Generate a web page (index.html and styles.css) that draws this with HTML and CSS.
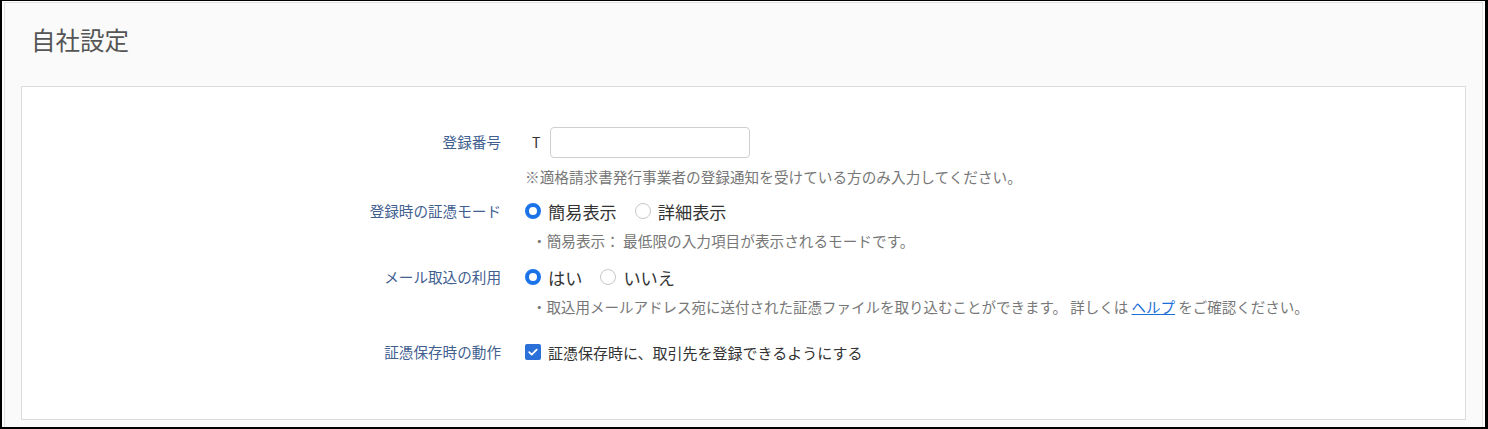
FILE: index.html
```html
<!DOCTYPE html>
<html lang="ja">
  <head>
    <meta charset="UTF-8" />
    <meta name="viewport" content="width=device-width, initial-scale=1.0" />
    <title>自社設定</title>
    <link rel="stylesheet" href="styles.css">
  </head>
  <body>
    <div class="frame">
      <div class="panel">
        <h1 class="page-title">自社設定</h1>

        <div class="card">
          <div class="field">
            <div class="field-label field-label--input">登録番号</div>
            <div class="field-body">
              <div class="reg-line">
                <span class="reg-prefix">T</span>
                <input type="text" class="text-input" />
              </div>
              <p class="note note--first">※適格請求書発行事業者の登録通知を受けている方のみ入力してください。</p>
            </div>
          </div>

          <div class="field">
            <div class="field-label">登録時の証憑モード</div>
            <div class="field-body">
              <div class="options">
                <label class="option"><span class="radio checked"></span>簡易表示</label>
                <label class="option"><span class="radio"></span>詳細表示</label>
              </div>
              <p class="note note--bullet">・簡易表示： 最低限の入力項目が表示されるモードです。</p>
            </div>
          </div>

          <div class="field field--mail">
            <div class="field-label">メール取込の利用</div>
            <div class="field-body">
              <div class="options">
                <label class="option"><span class="radio checked"></span>はい</label>
                <label class="option"><span class="radio"></span>いいえ</label>
              </div>
              <p class="note note--bullet note--long">・取込用メールアドレス宛に送付された証憑ファイルを取り込むことができます。 詳しくは <a href="#" class="help-link">ヘルプ</a> をご確認ください。</p>
            </div>
          </div>

          <div class="field field--spaced">
            <div class="field-label">証憑保存時の動作</div>
            <div class="field-body">
              <label class="check-option">
                <span class="checkbox">
                  <svg width="16" height="16" viewBox="0 0 16 16"><path d="M4.2 8.2l2.5 2.4 5-5" fill="none" stroke="#fff" stroke-width="1.8" stroke-linecap="round" stroke-linejoin="round"/></svg>
                </span>
                証憑保存時に、取引先を登録できるようにする
              </label>
            </div>
          </div>
        </div>
      </div>
    </div>
  </body>
</html>
```

FILE: styles.css
```css
/* styles.css */
* {
  box-sizing: border-box;
}

body {
  margin: 0;
  font-family: "Noto Sans CJK JP", "Noto Sans", sans-serif;
  background: #fff;
}

.frame {
  height: 429px;
  border-style: solid;
  border-color: #000;
  border-width: 1px 3px 2px 2px;
  padding: 1px 2px 0 2px;
  overflow: hidden;
}

.panel {
  height: 440px;
  background: #fafafa;
  border: 1px solid #e3e3e3;
  padding: 0 16px;
}

.page-title {
  margin: 0;
  padding: 19px 0 28px 10px;
  font-size: 24.5px;
  line-height: 36px;
  font-weight: normal;
  color: #555;
}

.card {
  height: 334px;
  background: #fff;
  border: 1px solid #dcdcdc;
  padding-top: 40px;
}

.field {
  display: grid;
  grid-template-columns: 479px 1fr;
  column-gap: 24px;
}

.field + .field {
  margin-top: 12px;
}

.field--mail {
  margin-top: 14px !important;
}

.field--spaced {
  margin-top: 23px !important;
}

.field-label {
  text-align: right;
  font-size: 14.6px;
  line-height: 24px;
  color: #41608f;
}

.field-label--input {
  line-height: 30px;
}

.reg-line {
  display: flex;
  align-items: center;
  height: 30px;
}

.reg-prefix {
  width: 25px;
  padding-left: 7px;
  font-size: 14px;
  color: #333;
}

.text-input {
  width: 200px;
  height: 31px;
  border: 1px solid #cfcfcf;
  border-radius: 4px;
  background: #fff;
  outline: none;
}

.note {
  margin: 8px 0 0;
  font-size: 14.65px;
  line-height: 20px;
  color: #777;
}

.note--first {
  margin-top: 10px;
}

.note--bullet {
  padding-left: 7px;
}

.note--long {
  font-size: 14.5px;
}

.help-link {
  color: #1a6fd6;
  text-decoration: underline;
}

.options {
  display: flex;
  align-items: center;
  height: 24px;
  gap: 18px;
}

.option {
  display: flex;
  align-items: center;
  gap: 7px;
  font-size: 17.2px;
  color: #333;
}

.radio {
  width: 16px;
  height: 16px;
  border: 1px solid #c8c8c8;
  border-radius: 50%;
  background: #fff;
}

.radio.checked {
  border: 4px solid #1a73e8;
}

.check-option {
  display: flex;
  align-items: center;
  gap: 7px;
  height: 24px;
  font-size: 15px;
  color: #333;
}

.checkbox {
  display: flex;
  width: 16px;
  height: 16px;
  border-radius: 2px;
  background: #2b6fd8;
}
```
